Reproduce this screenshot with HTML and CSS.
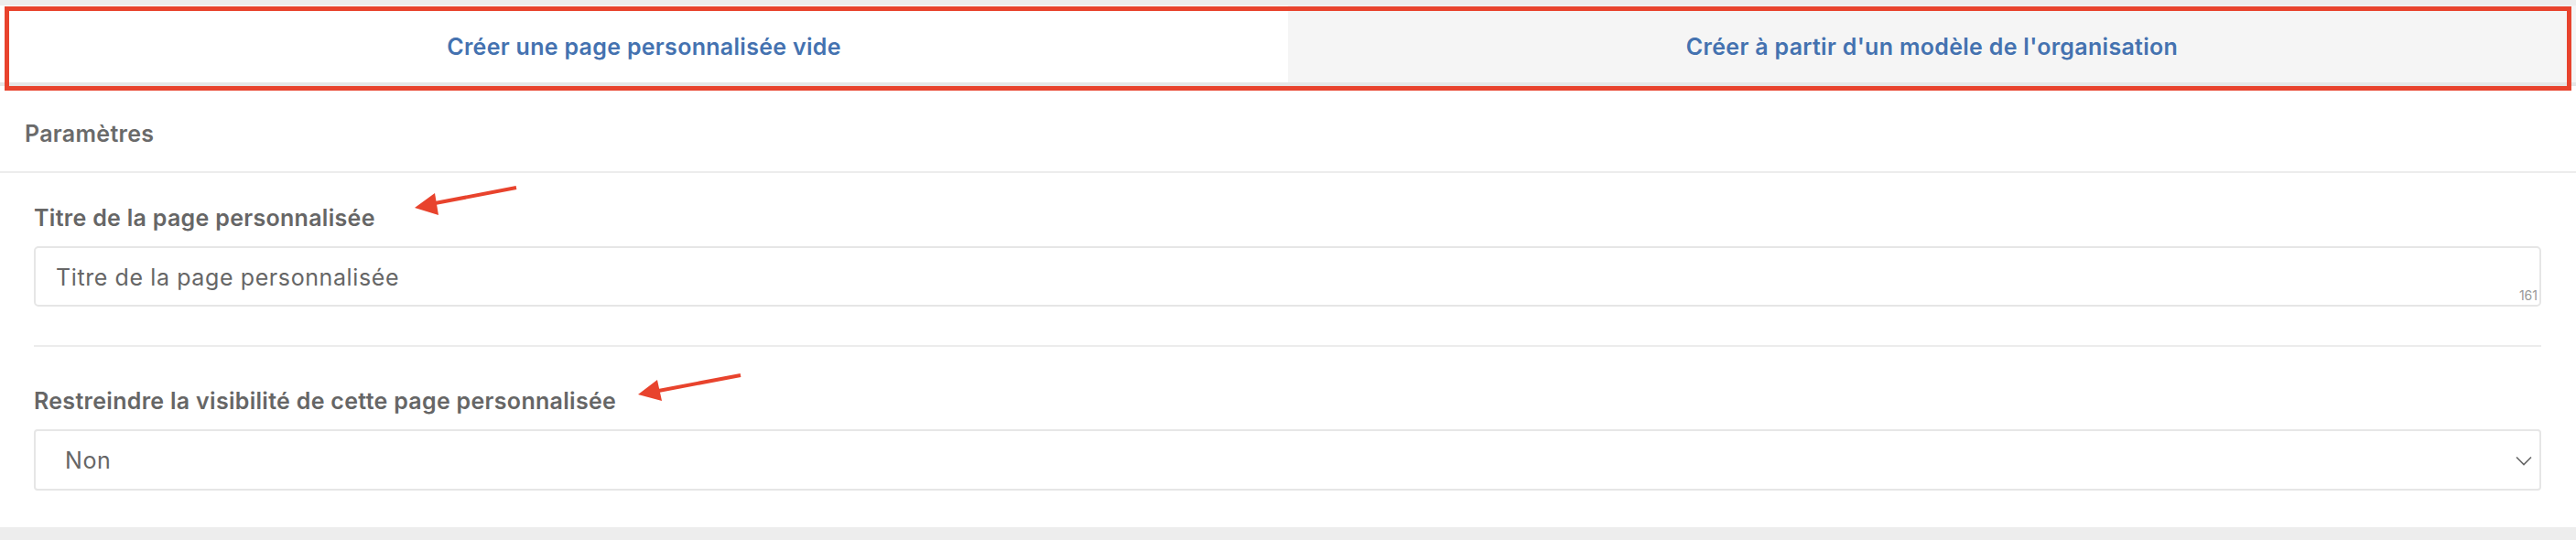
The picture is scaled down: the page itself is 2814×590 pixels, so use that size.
FILE: index.html
```html
<!DOCTYPE html>
<html lang="fr">
<head>
    <meta charset="UTF-8">
    <meta name="viewport" content="width=device-width, initial-scale=1.0">
    <title>Nouvelle page personnalisée</title>
    <link rel="stylesheet" href="styles.css">
</head>
<body>
    <div class="page">
        <!-- Onglets -->
        <div class="tabs">
            <div class="tab active">Créer une page personnalisée vide</div>
            <div class="tab">Créer à partir d'un modèle de l'organisation</div>
        </div>

        <!-- Paramètres -->
        <div class="card">
            <div class="card-header">Paramètres</div>
            <div class="card-body">
                <div class="field">
                    <label class="field-label">Titre de la page personnalisée</label>
                    <div class="text-input">
                        <span class="input-text">Titre de la page personnalisée</span>
                        <span class="counter">161</span>
                    </div>
                </div>
                <div class="divider"></div>
                <div class="field">
                    <label class="field-label">Restreindre la visibilité de cette page personnalisée</label>
                    <div class="select">
                        <span class="input-text">Non</span>
                        <svg class="chevron" width="18" height="11" viewBox="0 0 18 11">
                            <path d="M1 1.5 L9 9.5 L17 1.5" fill="none" stroke="#666" stroke-width="1.6"/>
                        </svg>
                    </div>
                </div>
            </div>
        </div>

        <!-- annotations -->
        <div class="highlight-box"></div>
        <svg class="annotations" width="2814" height="590" viewBox="0 0 2814 590">
            <line x1="564" y1="205" x2="470" y2="223" stroke="#e8432d" stroke-width="4"/>
            <polygon points="453,227 475,211 479,235" fill="#e8432d"/>
            <line x1="809" y1="410" x2="714" y2="428" stroke="#e8432d" stroke-width="4"/>
            <polygon points="697,431 718,415 723,438" fill="#e8432d"/>
        </svg>
    </div>
</body>
</html>
```

FILE: styles.css
```css
* {
    margin: 0;
    padding: 0;
    box-sizing: border-box;
    font-family: Inter, Lato, sans-serif;
}

body {
    background-color: #ededed;
}

.page {
    position: relative;
    padding-top: 6px;
    padding-bottom: 14px;
}

.tabs {
    display: flex;
    border-bottom: 4px solid #e6e6e6;
}

.tab {
    flex: 1;
    padding: 30px 0 24px;
    text-align: center;
    font-size: 25px;
    line-height: 30px;
    font-weight: 600;
    letter-spacing: 0.3px;
    color: #4472b0;
    background-color: #f5f5f5;
}

.tab.active {
    background-color: #fff;
}

.card {
    background: #fff;
}

.card-header {
    padding: 37px 27px 26px;
    font-size: 25px;
    line-height: 30px;
    font-weight: 600;
    letter-spacing: 0.3px;
    color: #6a6a6a;
    border-bottom: 2px solid #ececec;
}

.card-body {
    padding: 34px 38px 40px 37px;
}

.field-label {
    display: block;
    font-size: 25px;
    line-height: 30px;
    font-weight: 600;
    letter-spacing: 0.3px;
    color: #666;
    margin-bottom: 16px;
}

.text-input {
    position: relative;
    display: flex;
    align-items: center;
    height: 66px;
    padding: 1px 22px 0;
    border: 2px solid #e6e6e6;
    border-radius: 5px;
}

.input-text {
    font-size: 25px;
    line-height: 30px;
    letter-spacing: 0.6px;
    color: #666;
}

.counter {
    position: absolute;
    right: 2px;
    bottom: 3px;
    font-size: 14px;
    line-height: 15px;
    color: #999;
}

.divider {
    height: 2px;
    background: #ececec;
    margin: 42px 0 44px;
}

.select {
    display: flex;
    align-items: center;
    justify-content: space-between;
    height: 67px;
    padding: 1px 8px 0 32px;
    border: 2px solid #e6e6e6;
    border-radius: 4px;
}

.highlight-box {
    position: absolute;
    left: 5px;
    top: 7px;
    width: 2804px;
    height: 92px;
    border: 5px solid #e8432d;
}

.annotations {
    position: absolute;
    left: 0;
    top: 0;
}
```
